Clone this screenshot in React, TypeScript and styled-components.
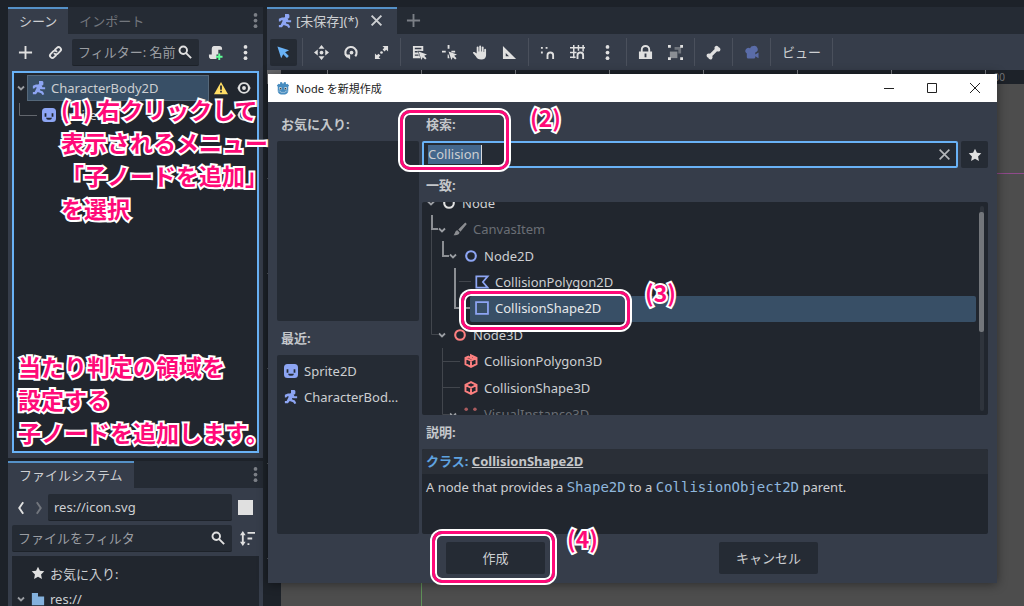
import React from 'react';
import styled, { createGlobalStyle, css } from 'styled-components';

const sans = '"Noto Sans", "Noto Sans CJK JP", sans-serif';
const c = {
  base: '#363d4a',
  dark: '#252b34',
  darker: '#21262e',
  back: '#1d2229',
  text: '#cdcfd2',
  dim: '#72767d',
  icon: '#e0e0e0',
  accent: '#69b2f6',
  select: '#384f66',
  blue: '#8da5f3',
  red: '#fc7f7f',
  pink: '#ff0a78',
};

const GlobalStyle = createGlobalStyle`
  *, *::before, *::after { box-sizing: border-box; }
  body { margin: 0; background: ${c.back}; }
  body, button, input { font-family: ${sans}; font-size: 13px; color: ${c.text}; }
  svg { display: block; flex: none; overflow: visible; }
  ul { list-style: none; margin: 0; padding: 0; }
`;

const Editor = styled.div`
  position: relative;
  display: grid;
  grid-template-columns: 255px minmax(0, 1fr);
  gap: 4px;
  height: 100vh;
  padding: 7px 0 0 8px;
  overflow: hidden;
`;
const Docks = styled.div`
  display: grid;
  grid-template: minmax(0, 1fr) 145px / minmax(0, 1fr);
  gap: 3px;
  min-height: 0;
`;
const Dock = styled.section`
  display: flex;
  flex-direction: column;
  min-height: 0;
  background: ${c.base};
`;
const TabBar = styled.div`
  display: flex;
  align-items: stretch;
  flex: none;
  height: 27px;
  background: ${c.dark};
`;
const Tab = styled.button<{ $active?: boolean; $closable?: boolean }>`
  display: flex;
  align-items: center;
  gap: 4px;
  border: 0;
  border-top: 2px solid ${p => (p.$active ? '#5591c7' : 'transparent')};
  padding: 0 ${p => (p.$closable ? 6 : 11)}px 2px 11px;
  white-space: nowrap;
  background: ${p => (p.$active ? c.base : 'transparent')};
  color: ${p => (p.$active ? c.text : c.dim)};
`;
const Spacer = styled.span`
  flex: 1;
`;
const IconButton = styled.button<{ $pressed?: boolean; $w?: number }>`
  display: flex;
  align-items: center;
  justify-content: center;
  flex: none;
  width: ${p => p.$w ?? 27}px;
  height: 27px;
  padding: 0;
  border: 0;
  border-radius: 2px;
  color: ${c.icon};
  background: ${p => (p.$pressed ? c.dark : 'transparent')};
`;
const DockRow = styled.div`
  display: flex;
  align-items: center;
  flex: none;
  gap: 3px;
  padding: 0 4px;
`;
const SceneTools = styled(DockRow)`
  height: 37px;
`;
const PathRow = styled(DockRow)`
  gap: 0;
  padding: 6px 4px 4px;
`;
const Field = styled.label`
  display: flex;
  align-items: center;
  flex: 1;
  min-width: 0;
  height: 27px;
  padding: 0 7px 0 6px;
  border-radius: 2px;
  border-bottom: 1px solid ${c.back};
  background: ${c.dark};
`;
const FieldInput = styled.input`
  flex: 1;
  min-width: 0;
  padding: 0;
  border: 0;
  outline: 0;
  background: transparent;
  &::placeholder { color: #9a9da2; opacity: 1; }
`;
const SceneTree = styled.ul`
  && {
    flex: 1;
    margin: 0 4px 5px;
    padding: 1px;
    border: 2px solid ${c.accent};
    background: ${c.darker};
  }
`;
const SceneRow = styled.li`
  display: flex;
  align-items: center;
  height: 27px;
`;
const SceneItem = styled.span<{ $selected?: boolean }>`
  display: flex;
  align-items: center;
  gap: 5px;
  width: 182px;
  height: 26px;
  padding: 0 4px;
  border: 1px solid ${p => (p.$selected ? '#55687a' : 'transparent')};
  background: ${p => (p.$selected ? c.select : 'transparent')};
`;
const SceneChild = styled(SceneItem)`
  width: 172px;
`;
const Cell = styled.span<{ $w: number }>`
  display: flex;
  align-items: center;
  justify-content: center;
  flex: none;
  width: ${p => p.$w}px;
`;
const FileTree = styled.ul`
  && {
    flex: 1;
    margin: 4px 4px 0;
    padding: 4px 3px 0;
    background: ${c.darker};
    overflow: hidden;
  }
`;
const FileRow = styled.li`
  display: flex;
  align-items: center;
  gap: 5px;
  height: 26px;
`;
const Swatch = styled.span`
  width: 15px;
  height: 15px;
  background: ${c.icon};
`;

const Main = styled.main`
  display: flex;
  flex-direction: column;
  min-width: 0;
  background: ${c.base};
`;
const Toolbar = styled.div`
  display: flex;
  align-items: center;
  flex: none;
  gap: 3px;
  height: 36px;
  padding: 0 3px;
`;
const ViewButton = styled(IconButton)`
  width: 51px;
  padding-bottom: 2px;
  color: ${c.text};
`;
const Separator = styled.span`
  flex: none;
  width: 5px;
  height: 28px;
  border-left: 2px solid transparent;
  border-right: 2px solid transparent;
  background: #4a505c;
  background-clip: padding-box;
`;
const Viewport = styled.div`
  flex: 1;
  display: grid;
  grid-template: 14px minmax(0, 1fr) / 14px minmax(0, 1fr);
  background: #4d4d4d;
`;
const RulerCorner = styled.span`
  background: #6a6b6e;
`;
const TopRuler = styled.span`
  position: relative;
  background:
    repeating-linear-gradient(90deg, transparent 0 46px, #7b7e83 46px 47px, transparent 47px 94px),
    ${c.back};
`;
const RulerMark = styled.span`
  position: absolute;
  right: 19px;
  top: 2px;
  font-size: 10px;
  line-height: 10px;
  color: #75787c;
`;
const SideRuler = styled.span`
  background:
    repeating-linear-gradient(180deg, transparent 0 94px, #54585e 94px 95px),
    ${c.back};
`;
const Canvas = styled.div`
  display: grid;
  grid-template: 90px 1fr / 141px 1fr;
`;
const AxisCell = styled.span<{ $x?: boolean; $y?: boolean }>`
  border: 0 solid;
  border-color: transparent #5f9158 #8f4a8b transparent;
  border-bottom-width: ${p => (p.$x ? 1 : 0)}px;
  border-right-width: ${p => (p.$y ? 1 : 0)}px;
`;

const Dialog = styled.div`
  position: absolute;
  left: 268px;
  right: 27px;
  top: 74px;
  background: ${c.base};
  box-shadow: 0 1px 10px rgba(0, 0, 0, 0.45);
`;
const TitleBar = styled.div`
  display: flex;
  align-items: center;
  height: 28px;
  padding-right: 1px;
  background: #fff;
  color: #222;
  font-size: 11px;
`;
const Title = styled.span`
  display: flex;
  align-items: center;
  gap: 6px;
  flex: 1;
  padding-left: 8px;
`;
const WindowButton = styled.button`
  display: flex;
  align-items: center;
  justify-content: center;
  width: 43px;
  height: 28px;
  padding: 0;
  border: 0;
  background: none;
  color: #222;
`;
const DialogBody = styled.div`
  display: grid;
  grid-template-columns: 142px minmax(0, 1fr);
  gap: 3px;
  padding: 0 9px;
`;
const Column = styled.div`
  display: flex;
  flex-direction: column;
  min-width: 0;
`;
const Heading = styled.label<{ $first?: boolean }>`
  display: flex;
  align-items: center;
  height: ${p => (p.$first ? 39 : 34)}px;
  padding: ${p => (p.$first ? 4 : 0)}px 4px 1px;
  font-weight: 700;
  color: #c4c7ca;
`;
const ItemList = styled.ul`
  && {
    height: 180px;
    padding: 3px 7px;
    border-radius: 2px;
    background: ${c.dark};
  }
  &:last-child { flex: 1; }
`;
const ListItem = styled.li`
  display: flex;
  align-items: center;
  gap: 6px;
  height: 26px;
  white-space: nowrap;
`;
const SearchRow = styled.div`
  display: flex;
  gap: 3px;
`;
const SearchField = styled.div`
  display: flex;
  align-items: center;
  flex: 1;
  height: 27px;
  padding: 0 5px 0 4px;
  border: 2px solid ${c.accent};
  border-radius: 2px;
  background: ${c.dark};
`;
const SearchInput = styled.input`
  flex: 1;
  min-width: 0;
  height: 19px;
  padding: 0 0 1px;
  border: 0;
  outline: 0;
  background:
    linear-gradient(90deg, #44678c 53px, #d8dade 53px 54px, transparent 54px) no-repeat;
`;
const ClearButton = styled.button`
  padding: 0;
  border: 0;
  background: none;
  color: #b4b7bb;
`;
const ResultTree = styled.div`
  position: relative;
  height: 213px;
  border-radius: 2px;
  background: ${c.darker};
  overflow: hidden;
`;
const ResultRows = styled.ul`
  && {
    display: grid;
    grid-auto-rows: 1fr;
    height: 238px;
    margin-top: -12px;
    padding: 0 12px 0 3px;
  }
`;
const ResultRow = styled.li<{ $depth: number }>`
  display: flex;
  align-items: center;
  padding-left: ${p => p.$depth * 11}px;
`;
const ResultItem = styled.span<{ $selected?: boolean; $dim?: boolean }>`
  display: flex;
  align-items: center;
  align-self: stretch;
  gap: 6px;
  flex: 1;
  padding: 0 0 1px 5px;
  border-radius: 2px;
  color: ${p => (p.$dim ? '#6a6e75' : p.$selected ? '#e6e8ea' : c.text)};
  background: ${p => (p.$selected ? c.select : 'transparent')};
`;
const Guides = styled.svg`
  position: absolute;
  left: 0;
  top: 0;
  fill: none;
`;
const ScrollTrack = styled.span`
  position: absolute;
  right: 4px;
  top: 4px;
  bottom: 4px;
  width: 4px;
  border-radius: 2px;
  background: #2f343c;
`;
const ScrollThumb = styled.span`
  position: absolute;
  left: -1px;
  right: 0;
  top: 6px;
  height: 120px;
  border-radius: 2px;
  background: #73767b;
`;
const Description = styled.div`
  height: 85px;
  border-radius: 2px;
  background: ${c.darker};
  overflow: hidden;
`;
const ClassLine = styled.div`
  height: 25px;
  padding: 0 4px;
  line-height: 25px;
  font-weight: 700;
  background: #2a2f37;
  color: #5fa3e0;
`;
const ClassLink = styled.a`
  color: #c4c6c9;
  text-decoration: underline;
`;
const Brief = styled.p`
  margin: 0;
  padding: 0 4px;
  line-height: 26px;
  white-space: nowrap;
`;
const CodeLink = styled.a`
  font-family: "DejaVu Sans Mono", monospace;
  font-size: 14px;
  line-height: 20px;
  color: #8fb6dc;
  text-decoration: none;
`;
const Actions = styled.div`
  display: flex;
  justify-content: space-evenly;
  padding: 8px 5px 9px 4px;
`;
const ActionWrap = styled.div`
  position: relative;
`;
const ActionButton = styled.button`
  width: 99px;
  height: 32px;
  padding: 0 0 2px;
  border: 0;
  border-radius: 2px;
  background: ${c.dark};
`;

const outline = css`
  color: ${c.pink};
  font-weight: 700;
  font-size: 23px;
  white-space: nowrap;
  paint-order: stroke fill;
  -webkit-text-stroke: 4px #fff;
`;
const Note = styled.p<{ $left: number; $top: number }>`
  ${outline}
  position: absolute;
  z-index: 3;
  left: ${p => p.$left}px;
  top: ${p => p.$top}px;
  margin: 0;
  line-height: 33px;
  font-family: "Noto Sans CJK JP", sans-serif;
`;
const Ring = styled.span<{ $w: number; $h: number; $left: number; $top: number }>`
  position: absolute;
  z-index: 2;
  left: ${p => p.$left}px;
  top: ${p => p.$top}px;
  width: ${p => p.$w}px;
  height: ${p => p.$h}px;
  border: 3px solid ${c.pink};
  border-radius: 10px;
  box-shadow: 0 0 0 2px #fff, inset 0 0 0 2px #fff;
  pointer-events: none;
`;

type IconProps = { color?: string; size?: number };
const Svg = ({ size = 15, color = 'currentColor', children }: IconProps & { children: React.ReactNode }) => (
  <svg width={size} height={size} viewBox="0 0 16 16" fill={color} aria-hidden="true">{children}</svg>
);
const Plus = (p: IconProps) => <Svg {...p}><path d="M7 1h2v6h6v2H9v6H7V9H1V7h6z" /></Svg>;
const Dots = (p: IconProps) => (
  <Svg {...p}><circle cx="8" cy="2" r="2" /><circle cx="8" cy="8" r="2" /><circle cx="8" cy="14" r="2" /></Svg>
);
const LinkIcon = () => (
  <Svg>
    <g fill="none" stroke="currentColor" strokeWidth="2" strokeLinecap="round">
      <path d="M7.500 5l2-2a2.500 2.500 0 0 1 3.600 3.600L10.500 9.200a2.500 2.500 0 0 1-3.600 0" />
      <path d="M8.500 11l-2 2a2.500 2.500 0 0 1-3.600-3.600L5.500 6.800a2.500 2.500 0 0 1 3.600 0" />
    </g>
  </Svg>
);
const SearchIcon = () => (
  <Svg size={14}><g fill="none" stroke={c.icon} strokeWidth="2.200"><circle cx="6" cy="6" r="4.300" /><path d="M9 9l6 6" /></g></Svg>
);
const ScriptAdd = () => (
  <Svg>
    <path d="M6 1a3 3 0 0 0-2 3v6H1v2a3 3 0 0 0 3 3h5v-5h2V5h4V4a3 3 0 0 0-3-3z" />
    <path d="M11 9h2v2.500h2.500v2H13V16h-2v-2.500H8.500v-2H11z" fill="#5fff97" />
  </Svg>
);
const Chevron = ({ color = '#9a9da2' }: IconProps) => (
  <svg width="8" height="8" viewBox="0 0 8 8" fill="none" stroke={color} strokeWidth="1.800"><path d="M1 2.500l3 3 3-3" /></svg>
);
const Runner = ({ size = 14 }: IconProps) => (
  <Svg size={size} color={c.blue}>
    <path d="M8 0h4l1 1v3l-1 1h-1l1 2h3v2.500h-4L9.500 9 9 10.500l3.500 1.500 1.500 3-2 1-1.500-2-4-1.500L4.500 15H1v-2.500h2l2.500-5L4 7 2.500 8.500H1V5.500L4.500 4H7l1-.5z" />
  </Svg>
);
const Sprite = ({ size = 14 }: IconProps) => (
  <Svg size={size} color={c.blue}>
    <path fillRule="evenodd" d="M4 0a4 4 0 0 0-4 4v8a4 4 0 0 0 4 4h8a4 4 0 0 0 4-4V4a4 4 0 0 0-4-4zM3 6h2v4H3zm8 0h2v4h-2zM4.500 11h7q-.5 2.500-3.500 2.500T4.500 11z" />
  </Svg>
);
const Warning = () => (
  <Svg size={14}><path d="M8 1L0 15h16z" fill="#ffdd65" /><path d="M7 5h2v5H7zm0 6h2v2H7z" fill="#21262e" /></Svg>
);
const Eye = () => (
  <Svg size={14} color={c.icon}>
    <path d="M8 1.500c3.500 0 6 2 7.500 6.500C14 12.500 11.500 14.500 8 14.500S2 12.500.5 8C2 3.500 4.500 1.500 8 1.500z" />
    <circle cx="8" cy="8" r="4.500" fill="#21262e" /><circle cx="8" cy="8" r="2.200" />
  </Svg>
);
const Star = (p: IconProps) => <Svg {...p}><path d="M8 .8l2.200 4.700 5 .6-3.700 3.500 1 5.200L8 12.300l-4.500 2.500 1-5.200L.8 6.100l5-.6z" /></Svg>;
const Cross = ({ size = 13, w = 2.4 }: { size?: number; w?: number }) => (
  <Svg size={size}><path d="M2 2l12 12M14 2L2 14" stroke="currentColor" strokeWidth={w} fill="none" /></Svg>
);
const Folder = () => <Svg size={14} color="#84b1dd"><path d="M1 1h7v4h7v10H1z" /></Svg>;
const Sort = () => (
  <Svg>
    <path d="M3 4v8" stroke="currentColor" strokeWidth="2" />
    <path d="M3 0L0 4.500h6zM3 16l-3-4.500h6zM8 1h8v2H8zm0 6h5v2H8zm0 6h2v2H8z" />
  </Svg>
);
const Arrow = ({ back, dim }: { back?: boolean; dim?: boolean }) => (
  <Svg size={14} color="none">
    <path d={back ? 'M10.500 1.500L6 8l4.500 6.500' : 'M5.500 1.500L10 8l-4.500 6.500'} stroke={dim ? c.dim : c.icon} strokeWidth="2.200" />
  </Svg>
);
const Pointer = () => <Svg color="#69b2f6"><path d="M1.500 1.500l4 12.500 2.200-4.200 4 4 2-2-4-4 4.300-2.300z" /></Svg>;
const Move = () => (
  <Svg><circle cx="8" cy="8" r="2" /><path d="M8 0l3.200 4H4.800zM8 16l3.200-4H4.800zM0 8l4-3.200v6.400zM16 8l-4-3.200v6.400z" /></Svg>
);
const Rotate = () => (
  <Svg>
    <path d="M4 13A6 6 0 1 1 12 12" fill="none" stroke="currentColor" strokeWidth="2.200" />
    <path d="M0 10h6.500v5.500z" /><circle cx="8" cy="8" r="2" />
  </Svg>
);
const Scale = () => (
  <Svg><path d="M9 1h6v6l-2-2-1.800 1.800-2-2L11 3zM7 15H1V9l2 2 1.800-1.800 2 2L5 13z" /><circle cx="8" cy="8" r="1.400" /></Svg>
);
const cursorPath = 'M7 7l3 9 1.500-3 2.500 2.500 1.500-1.500-2.500-2.500 3-1.500z';
const ListSelect = () => (
  <Svg><path fillRule="evenodd" d="M1 1h11v5.500L6 6l3 8H1zM3 3v1.500h7V3zm0 3.500V8h3V6.500zM3 10v1.500h4V10z" /><path d={cursorPath} /></Svg>
);
const Pivot = () => <Svg><path d="M6 0h2v4H6zM0 6h4v2H0zm10 0h4v2h-4zM6 10h1l1 4H6z" /><path d={cursorPath} /></Svg>;
const Hand = () => (
  <Svg><path d="M5 2.500a1 1 0 0 1 2 0V7h.7V1.500a1 1 0 0 1 2 0V7h.7V2.500a1 1 0 0 1 2 0V7.500h.6V5a1 1 0 0 1 2 0v6c0 3-2 4.500-5 4.500-3.500 0-4.500-1-6-3.500L1 8.500c0-1 1-1.500 2-.8L5 9z" /></Svg>
);
const Ruler = () => <Svg><path fillRule="evenodd" d="M1 1v14h14zM4 8.500L7.500 12H4z" /></Svg>;
const Magnet = <path d="M8 15v-4a3 3 0 0 1 6 0v4" fill="none" stroke="currentColor" strokeWidth="2" />;
const SmartSnap = () => <Svg><path d="M1 2h2v2H1zm5 0h2v2H6zM1 7h2v2H1z" />{Magnet}</Svg>;
const GridSnap = () => (
  <Svg><path d="M4 0v14M9 0v6M14 0v7M0 3h16M0 8h7M0 13h6" stroke="currentColor" strokeWidth="1.600" fill="none" />{Magnet}</Svg>
);
const Lock = () => (
  <Svg><path fillRule="evenodd" d="M8 0a5 5 0 0 0-5 5v2H1v8h14V7h-2V5a5 5 0 0 0-5-5zm0 2a3 3 0 0 1 3 3v2H5V5a3 3 0 0 1 3-3zM7 9h2v4H7z" /></Svg>
);
const Group = () => (
  <Svg>
    <path d="M7 2h7v7h-3V5H7z" fill="#6f747c" /><path d="M2 7h8v7H2z" fill="#8a8e94" />
    <path d="M0 0h3v3H0zm13 0h3v3h-3zM0 13h3v3H0zm13 0h3v3h-3z" />
  </Svg>
);
const Bone = () => (
  <Svg><path d="M10 1.200a2.300 2.300 0 0 1 3.500 1.300 2.300 2.300 0 0 1 1.300 3.800c-1 .9-2.100.9-3 .4L6.700 11.800c.5.900.5 2-.4 3a2.300 2.300 0 0 1-3.800-1.300A2.300 2.300 0 0 1 1.200 9.700c1-.9 2.100-.9 3-.4l5.100-5.100c-.5-1-.3-2.200.7-3z" /></Svg>
);
const Camera = () => (
  <Svg color="#5a6ca8"><path d="M10 1a3.500 3.500 0 0 0-3.500 2.500A3 3 0 1 0 3 9v4a1.500 1.500 0 0 0 1.500 1.500h6A1.500 1.500 0 0 0 12 13v-1l3.500 2V8L12 10V8a3.600 3.600 0 0 0-2-7z" /></Svg>
);
const NodeRing = ({ color = c.icon }: IconProps) => <Svg size={14}><circle cx="8" cy="8" r="5.500" fill="none" stroke={color} strokeWidth="2.400" /></Svg>;
const Brush = () => <Svg size={14} color="#8b8d91"><path d="M14 .5l1.800 1.800L8.500 11 6 8.600zM5 9.300L7.500 12c-.5 2.500-3 3.500-7 3 2-1.500 1.500-5 4.500-5.700z" /></Svg>;
const Polygon2D = () => <Svg size={14}><path d="M1.500 1.500h13L9 8l5.500 6.500h-13z" fill="none" stroke={c.blue} strokeWidth="2" /></Svg>;
const Shape2D = () => <Svg size={14}><path d="M1.200 1.200h13.600v13.600H1.200z" fill="none" stroke={c.blue} strokeWidth="2" /></Svg>;
const Shape3D = () => (
  <Svg size={14}><path d="M8 1.300l6.300 3.200v7L8 14.700l-6.300-3.200v-7zM2 4.700l6 3 6-3M8 7.700v7" fill="none" stroke={c.red} strokeWidth="2.200" /></Svg>
);
const Polygon3D = () => (
  <Svg size={14}><path d="M8 5V1.500l6.300 3v7L8 14.700l-6.300-3.200v-7L5 3l3 2 6-.5M2 4.700l6 3 6-3M8 7.700v7" fill="none" stroke={c.red} strokeWidth="2.200" /></Svg>
);
const Visual3D = () => (
  <Svg size={14} color="#a85a5d"><circle cx="2.500" cy="2.500" r="2" /><circle cx="12.500" cy="2.500" r="2" /><circle cx="2.500" cy="13" r="2" /><circle cx="12.500" cy="13" r="2" /></Svg>
);
const GodotLogo = () => (
  <Svg size={14} color="#478cbf">
    <path d="M1 5l2-2 1.500.8L5 1l2 .3.3 1.500h1.400L9 1.300 11 1l.5 2.800L13 3l2 2-1 1.500V11c0 3-3 4.500-6 4.500S2 14 2 11V6.500z" />
    <circle cx="5" cy="8.500" r="1.600" fill="#d5e5f0" /><circle cx="11" cy="8.500" r="1.600" fill="#d5e5f0" />
    <circle cx="5.200" cy="8.600" r="1" fill="#414042" /><circle cx="10.800" cy="8.600" r="1" fill="#414042" />
    <path d="M2 11.500h3l.5 1.500h5l.5-1.500h3" fill="none" stroke="#d5e5f0" strokeWidth=".6" />
  </Svg>
);

const tools: { label: string; icon: React.ReactNode }[][] = [
  [{ label: '移動', icon: <Move /> }, { label: '回転', icon: <Rotate /> }, { label: '拡縮', icon: <Scale /> }],
  [
    { label: 'リスト選択', icon: <ListSelect /> },
    { label: 'ピボット', icon: <Pivot /> },
    { label: 'パン', icon: <Hand /> },
    { label: '定規', icon: <Ruler /> },
  ],
  [
    { label: 'スマートスナップ', icon: <SmartSnap /> },
    { label: 'グリッドスナップ', icon: <GridSnap /> },
    { label: 'スナップ設定', icon: <Dots /> },
  ],
  [{ label: 'ロック', icon: <Lock /> }, { label: 'グループ', icon: <Group /> }],
  [{ label: 'スケルトン', icon: <Bone /> }],
  [{ label: 'カメラ', icon: <Camera /> }],
];

const results: { name: string; depth: number; icon: React.ReactNode; open?: boolean; dim?: boolean; selected?: boolean }[] = [
  { name: 'Node', depth: 0, icon: <NodeRing />, open: true },
  { name: 'CanvasItem', depth: 1, icon: <Brush />, open: true, dim: true },
  { name: 'Node2D', depth: 2, icon: <NodeRing color={c.blue} />, open: true },
  { name: 'CollisionPolygon2D', depth: 3, icon: <Polygon2D /> },
  { name: 'CollisionShape2D', depth: 3, icon: <Shape2D />, selected: true },
  { name: 'Node3D', depth: 1, icon: <NodeRing color={c.red} />, open: true },
  { name: 'CollisionPolygon3D', depth: 2, icon: <Polygon3D /> },
  { name: 'CollisionShape3D', depth: 2, icon: <Shape3D /> },
  { name: 'VisualInstance3D', depth: 2, icon: <Visual3D />, open: true, dim: true },
];

const SceneDock = () => (
  <Dock>
    <TabBar>
      <Tab $active>シーン</Tab>
      <Tab>インポート</Tab>
      <Spacer />
      <IconButton $w={16} aria-label="ドックメニュー"><Dots color="#7b7f86" /></IconButton>
    </TabBar>
    <SceneTools>
      <IconButton aria-label="追加"><Plus /></IconButton>
      <IconButton aria-label="インスタンス化"><LinkIcon /></IconButton>
      <Field>
        <FieldInput aria-label="フィルター" placeholder="フィルター: 名前" />
        <SearchIcon />
      </Field>
      <IconButton aria-label="スクリプト"><ScriptAdd /></IconButton>
      <IconButton aria-label="メニュー"><Dots /></IconButton>
    </SceneTools>
    <SceneTree>
      <SceneRow>
        <Cell $w={12}><Chevron /></Cell>
        <SceneItem $selected><Runner />CharacterBody2D</SceneItem>
        <Cell $w={24}><Warning /></Cell>
        <Cell $w={22}><Eye /></Cell>
      </SceneRow>
      <SceneRow>
        <Cell $w={22}>
          <svg width="18" height="26" viewBox="0 0 18 26" fill="none" stroke="#62666d"><path d="M2.500 1v12.500H20" /></svg>
        </Cell>
        <SceneChild><Sprite />Sprite2D</SceneChild>
        <Cell $w={24} />
        <Cell $w={22}><Eye /></Cell>
      </SceneRow>
    </SceneTree>
  </Dock>
);

const FileDock = () => (
  <Dock>
    <TabBar>
      <Tab $active>ファイルシステム</Tab>
      <Spacer />
      <IconButton $w={16} aria-label="ドックメニュー"><Dots color="#7b7f86" /></IconButton>
    </TabBar>
    <PathRow>
      <IconButton $w={18} aria-label="戻る"><Arrow back /></IconButton>
      <IconButton $w={18} aria-label="進む"><Arrow dim /></IconButton>
      <Field><FieldInput aria-label="パス" defaultValue="res://icon.svg" /></Field>
      <IconButton aria-label="表示切替"><Swatch /></IconButton>
    </PathRow>
    <DockRow>
      <Field>
        <FieldInput aria-label="ファイルをフィルタ" placeholder="ファイルをフィルタ" />
        <SearchIcon />
      </Field>
      <IconButton $w={24} aria-label="並べ替え"><Sort /></IconButton>
    </DockRow>
    <FileTree>
      <FileRow><Cell $w={11} /><Star color={c.icon} size={14} />お気に入り:</FileRow>
      <FileRow><Cell $w={11}><Chevron /></Cell><Folder />res://</FileRow>
    </FileTree>
  </Dock>
);

const ResultsPanel = () => (
  <ResultTree>
    <Guides width="60" height="213" viewBox="0 0 60 213">
      <g stroke="#42464d">
        <path d="M9.500 28v104.500H16M37 79.500h12M20.500 146v66.500H28M21 159.500h17M21 185.500h17" />
      </g>
      <g stroke="#8b8e93" strokeWidth="2">
        <path d="M10 13v14h6M21 39v15h6M33 66v40h15" />
      </g>
    </Guides>
    <ResultRows>
      {results.map(r => (
        <ResultRow key={r.name} $depth={r.depth}>
          <Cell $w={12}>{r.open && <Chevron />}</Cell>
          <ResultItem $selected={r.selected} $dim={r.dim}>{r.icon}{r.name}</ResultItem>
        </ResultRow>
      ))}
    </ResultRows>
    <ScrollTrack><ScrollThumb /></ScrollTrack>
  </ResultTree>
);

const CreateNodeDialog = () => (
  <Dialog role="dialog" aria-label="Node を新規作成">
    <TitleBar>
      <Title><GodotLogo />Node を新規作成</Title>
      <WindowButton aria-label="最小化"><svg width="10" height="10" stroke="currentColor"><path d="M0 5.500h10" /></svg></WindowButton>
      <WindowButton aria-label="最大化"><svg width="10" height="10" stroke="currentColor" fill="none"><path d="M.5.5h9v9h-9z" /></svg></WindowButton>
      <WindowButton aria-label="閉じる"><svg width="10" height="10" stroke="currentColor"><path d="M0 0l10 10M10 0L0 10" /></svg></WindowButton>
    </TitleBar>
    <DialogBody>
      <Column>
        <Heading as="div" $first>お気に入り:</Heading>
        <ItemList />
        <Heading as="div">最近:</Heading>
        <ItemList>
          <ListItem><Sprite />Sprite2D</ListItem>
          <ListItem><Runner />CharacterBod...</ListItem>
        </ItemList>
      </Column>
      <Column>
        <Heading htmlFor="node-search" $first>検索:</Heading>
        <SearchRow>
          <SearchField>
            <SearchInput id="node-search" defaultValue="Collision" />
            <ClearButton aria-label="クリア"><Cross w={2} /></ClearButton>
          </SearchField>
          <IconButton $pressed aria-label="お気に入り"><Star size={14} /></IconButton>
        </SearchRow>
        <Heading as="div">一致:</Heading>
        <ResultsPanel />
        <Heading as="div">説明:</Heading>
        <Description>
          <ClassLine>クラス: <ClassLink href="#class">CollisionShape2D</ClassLink></ClassLine>
          <Brief>
            A node that provides a <CodeLink href="#shape">Shape2D</CodeLink> to a{' '}
            <CodeLink href="#object">CollisionObject2D</CodeLink> parent.
          </Brief>
        </Description>
      </Column>
    </DialogBody>
    <Actions>
      <ActionWrap>
        <ActionButton>作成</ActionButton>
        <Ring $left={-14} $top={-11} $w={123} $h={52} />
        <Note $left={121} $top={-20}>(4)</Note>
      </ActionWrap>
      <ActionButton>キャンセル</ActionButton>
    </Actions>
    <Ring $left={132} $top={36} $w={109} $h={60} />
    <Note $left={262} $top={27}>(2)</Note>
    <Ring $left={193} $top={217} $w={169} $h={39} />
    <Note $left={377} $top={202}>(3)</Note>
  </Dialog>
);

export default function App() {
  return (
    <>
      <GlobalStyle />
      <Editor>
        <Docks>
          <SceneDock />
          <FileDock />
        </Docks>
        <Main>
          <TabBar>
            <Tab $active $closable><Runner />[未保存](*)<Cell $w={28}><Cross /></Cell></Tab>
            <IconButton $w={34} aria-label="新しいタブ"><Plus color="#7b7f86" /></IconButton>
          </TabBar>
          <Toolbar>
            <IconButton $pressed aria-label="選択"><Pointer /></IconButton>
            {tools.map((group, i) => (
              <React.Fragment key={i}>
                <Separator />
                {group.map(t => <IconButton key={t.label} aria-label={t.label}>{t.icon}</IconButton>)}
              </React.Fragment>
            ))}
            <Separator />
            <ViewButton>ビュー</ViewButton>
            <Separator />
          </Toolbar>
          <Viewport>
            <RulerCorner />
            <TopRuler><RulerMark>00</RulerMark></TopRuler>
            <SideRuler />
            <Canvas>
              <AxisCell $x $y />
              <AxisCell $x />
              <AxisCell $y />
            </Canvas>
          </Viewport>
        </Main>
        <CreateNodeDialog />
        <Note $left={61} $top={93}>
          (1) 右クリックして<br />表示されるメニュー<br />「子ノードを追加」<br />を選択
        </Note>
        <Note $left={18} $top={350}>
          当たり判定の領域を<br />設定する<br />子ノードを追加します。
        </Note>
      </Editor>
    </>
  );
}
